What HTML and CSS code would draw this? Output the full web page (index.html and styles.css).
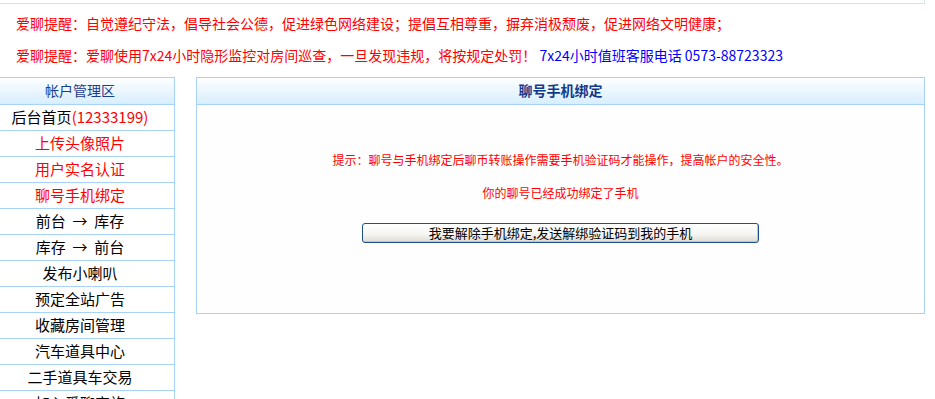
FILE: index.html
```html
<!DOCTYPE html>
<html>
<head>
	<meta charset="utf-8">
	<title>聊号手机绑定</title>
	<link rel="stylesheet" href="styles.css">
</head>

<body>

	<div class="topbar"></div>

	<div class="notice">
		<p>爱聊提醒：自觉遵纪守法，倡导社会公德，促进绿色网络建设；提倡互相尊重，摒弃消极颓废，促进网络文明健康；</p>
		<p>爱聊提醒：爱聊使用7x24小时隐形监控对房间巡查，一旦发现违规，将按规定处罚！ <span class="blue">7x24小时值班客服电话 0573-88723323</span></p>
	</div>

	<div class="main">
		<div class="side">
			<div class="side-title">帐户管理区</div>
			<a class="item">后台首页<span class="red">(12333199)</span></a>
			<a class="item red">上传头像照片</a>
			<a class="item red">用户实名认证</a>
			<a class="item red">聊号手机绑定</a>
			<a class="item">前台 &nbsp;→&nbsp; 库存</a>
			<a class="item">库存 &nbsp;→&nbsp; 前台</a>
			<a class="item">发布小喇叭</a>
			<a class="item">预定全站广告</a>
			<a class="item">收藏房间管理</a>
			<a class="item">汽车道具中心</a>
			<a class="item">二手道具车交易</a>
			<a class="item">加入爱聊家族</a>
		</div>

		<div class="panel">
			<div class="panel-title">聊号手机绑定</div>
			<div class="panel-body">
				<p class="tip">提示：聊号与手机绑定后聊币转账操作需要手机验证码才能操作，提高帐户的安全性。</p>
				<p class="tip">你的聊号已经成功绑定了手机</p>
				<button class="btn" type="button">我要解除手机绑定,发送解绑验证码到我的手机</button>
			</div>
		</div>
	</div>

</body>
</html>
```

FILE: styles.css
```css
body, html {
	height: 100%;
}

body {
	margin: 0;
	padding: 0;
	background: #fff;
	font-family: "Noto Sans CJK SC", "Noto Sans", sans-serif;
	font-size: 14px;
	color: #000;
	overflow: hidden;
}

p {
	margin: 0;
}

.red { color: #ff0000; }
.blue { color: #0000ff; }

.topbar {
	width: 924px;
	height: 3px;
	border-right: 1px solid #cfe9dc;
	border-bottom: 1px solid #cfe9dc;
}

.notice {
	padding: 3px 0 0 16px;
	color: #ff0000;
	font-size: 14px;
	line-height: 32px;
	white-space: nowrap;
}

.main {
	display: flex;
	align-items: flex-start;
	margin-top: 6px;
}

/* left menu */
.side {
	width: 174px;
	border-top: 1px solid #a6d2fb;
	border-right: 1px solid #a6d2fb;
}

.side-title {
	height: 26px;
	line-height: 25px;
	padding-right: 14px;
	text-align: center;
	color: #1c3d8f;
	background: linear-gradient(to bottom, #fdfeff, #d8eefd);
	border-bottom: 1px solid #a6d2fb;
}

.item {
	display: block;
	height: 23px;
	line-height: 23px;
	padding: 0 14px 2px 0;
	font-size: 15px;
	text-align: center;
	border-bottom: 1px solid #a6d2fb;
	white-space: nowrap;
}

/* right panel */
.panel {
	width: 727px;
	margin-left: 21px;
	border: 1px solid #a6d2fb;
}

.panel-title {
	height: 26px;
	line-height: 25px;
	text-align: center;
	font-weight: bold;
	color: #113a8b;
	background: linear-gradient(to bottom, #fdfeff, #d8eefd);
	border-bottom: 1px solid #a6d2fb;
}

.panel-body {
	display: flex;
	flex-direction: column;
	align-items: center;
	padding: 38px 0 70px;
	background: #fefefe;
}

.tip {
	color: #ff0000;
	font-size: 12px;
	line-height: 33px;
}

.btn {
	width: 397px;
	height: 20px;
	margin-top: 14px;
	padding: 0;
	font-family: "Noto Sans CJK SC", "Noto Sans", sans-serif;
	font-size: 13px;
	line-height: 18px;
	color: #000;
	border: 1px solid #1c4f8c;
	border-radius: 3px;
	background: linear-gradient(to bottom, #ffffff 0%, #f6f6f3 55%, #dedbd2 100%);
	box-shadow: inset -1px -1px 0 #c9c5ba;
}
```
